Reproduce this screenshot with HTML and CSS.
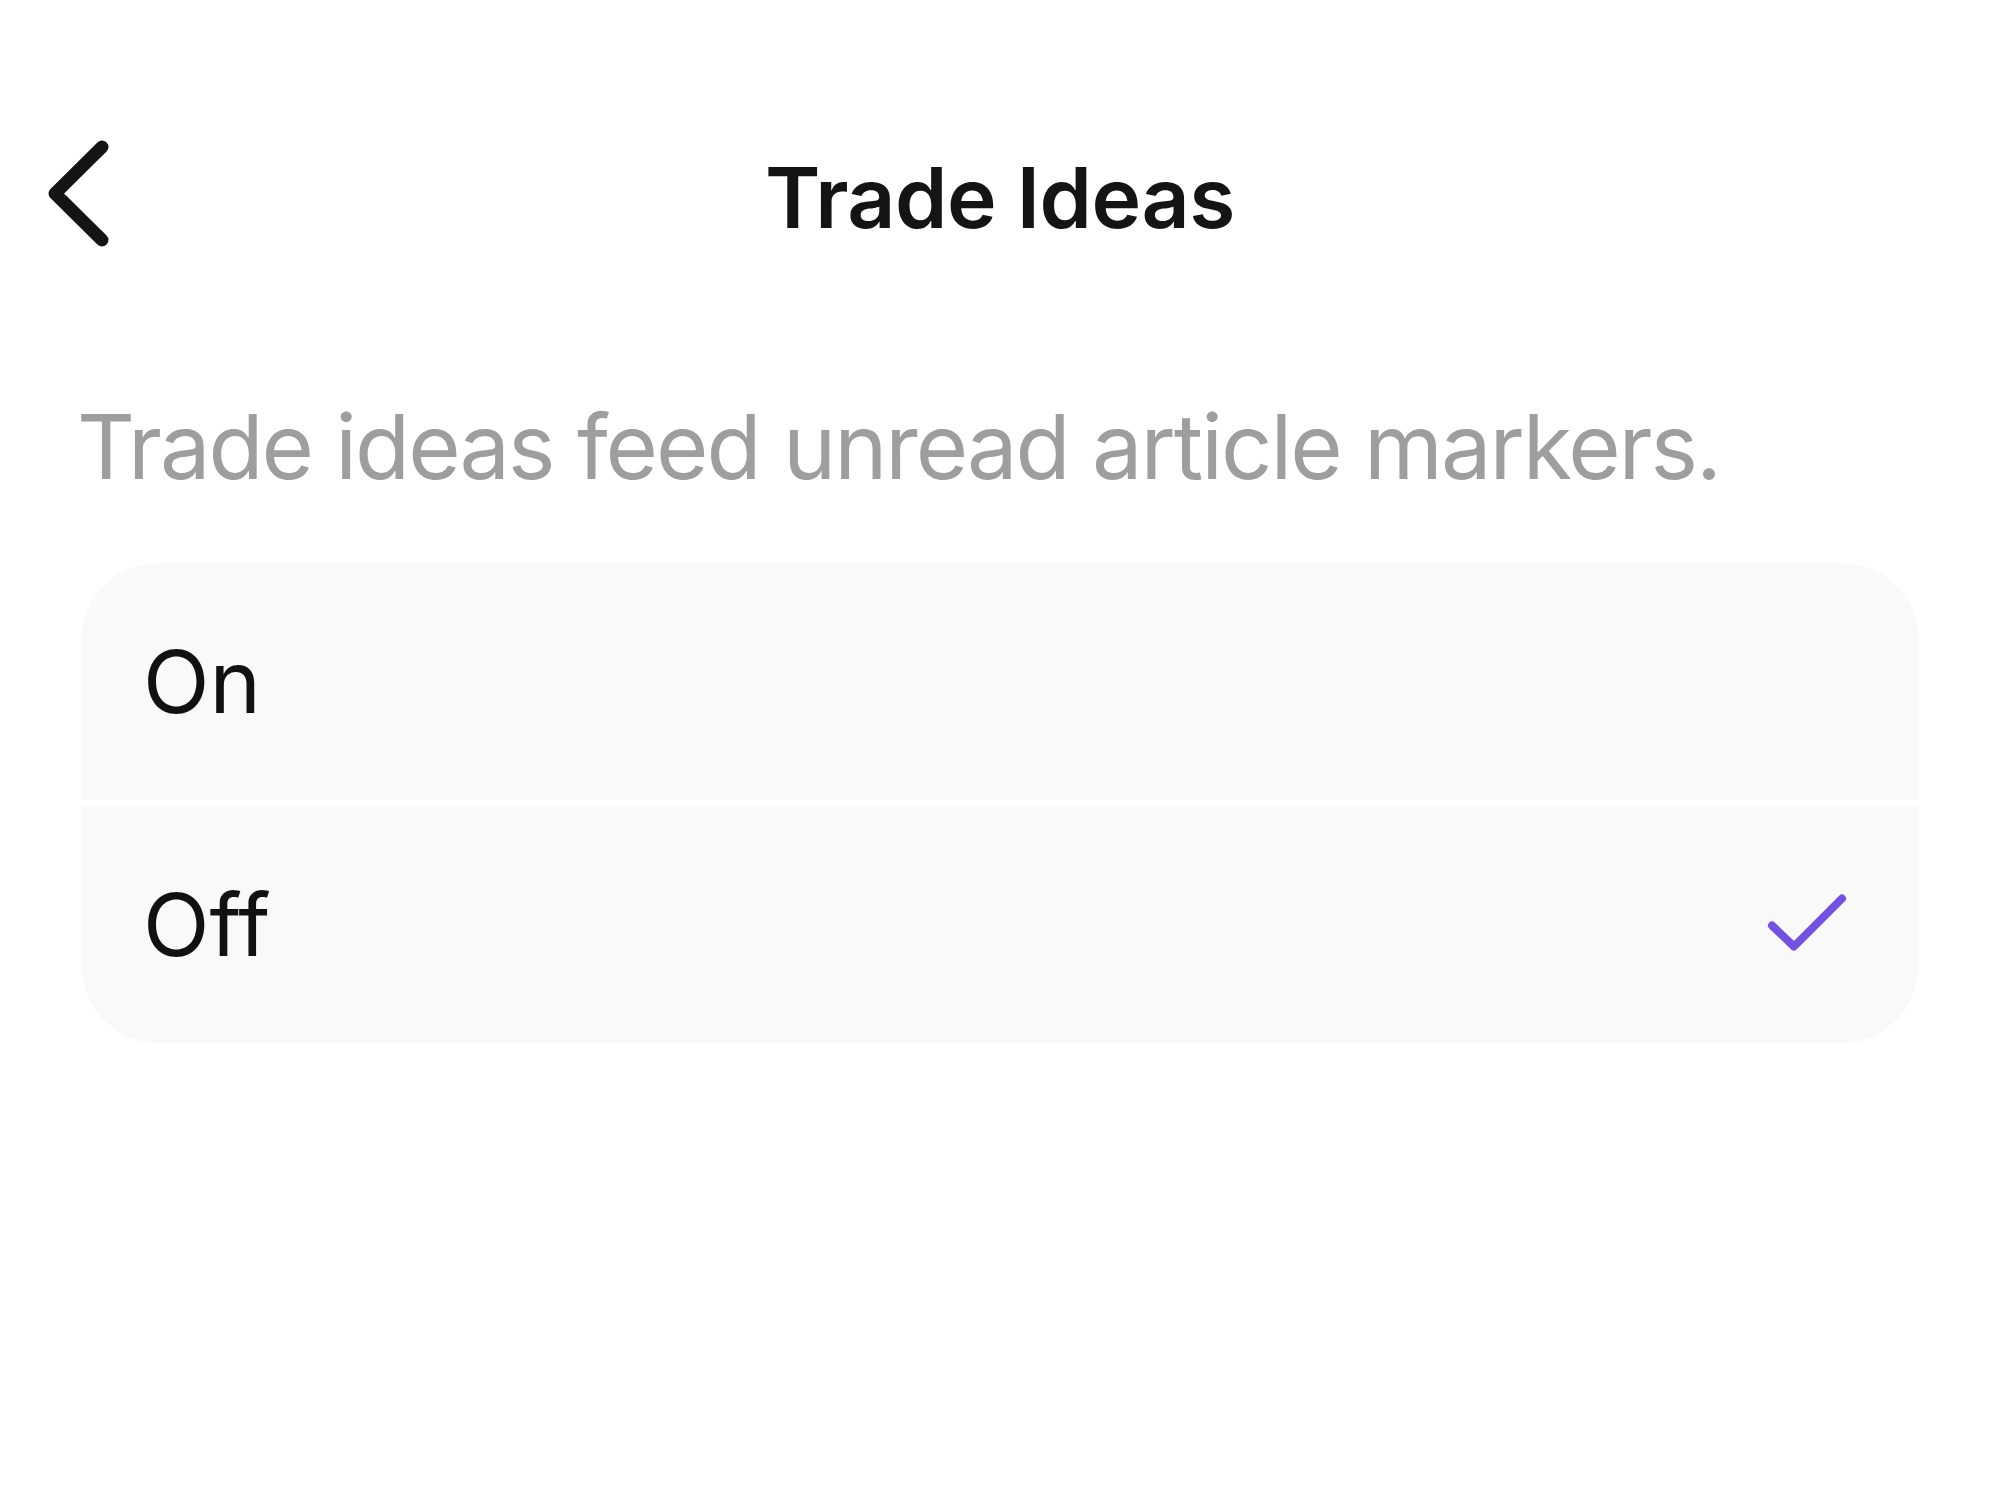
FILE: index.html
```html
<!DOCTYPE html>
<html lang="en">
<head>
<meta charset="utf-8">
<title>Trade Ideas</title>
<link rel="stylesheet" href="styles.css">
</head>
<body>
<div class="screen">
  <header class="nav">
    <button class="back" aria-label="Back">
      <svg class="back-icon" width="80" height="120" viewBox="0 0 80 120">
        <path d="M62 9 L15 55.5 L62 102" fill="none" stroke="#141414" stroke-width="13" stroke-linecap="round" stroke-linejoin="round"/>
      </svg>
    </button>
    <h1 class="title">Trade Ideas</h1>
    <div class="nav-spacer"></div>
  </header>
  <main class="content">
    <p class="desc">Trade ideas feed unread article markers.</p>
    <div class="card">
      <div class="option">
        <span class="option-label">On</span>
      </div>
      <div class="option">
        <span class="option-label">Off</span>
        <svg class="check" width="90" height="68" viewBox="0 0 90 68">
          <path d="M10 34.5 L32 55.5 L80 7.5" fill="none" stroke="#7352e3" stroke-width="8" stroke-linecap="round" stroke-linejoin="round"/>
        </svg>
      </div>
    </div>
  </main>
</div>
</body>
</html>
```

FILE: styles.css
```css
* {
  box-sizing: border-box;
}

html, body {
  margin: 0;
  padding: 0;
  background: #ffffff;
}

body {
  font-family: "Inter", "Noto Sans", "Liberation Sans", sans-serif;
  color: #141414;
}

.screen {
  width: 2000px;
  height: 1508px;
  overflow: hidden;
}

.nav {
  display: grid;
  grid-template-columns: 1fr auto 1fr;
  align-items: center;
  height: 120px;
  margin-top: 138px;
  padding: 0 40px;
}

.back {
  justify-self: start;
  border: 0;
  background: none;
  padding: 0;
  margin: 0;
  width: 80px;
  height: 120px;
  display: block;
}

.back-icon {
  display: block;
}

.title {
  margin: 0;
  font-size: 84px;
  line-height: 100px;
  font-weight: 600;
  color: #141414;
  letter-spacing: -0.5px;
}

.content {
  padding: 0 82px;
  margin-top: 135px;
}

.desc {
  margin: 0 0 62px -5px;
  font-size: 90px;
  line-height: 108px;
  font-weight: 400;
  color: #9e9e9e;
  letter-spacing: -2px;
  white-space: nowrap;
}

.card {
  display: flex;
  flex-direction: column;
  gap: 6px;
  border-radius: 76px;
  overflow: hidden;
}

.option {
  height: 237px;
  background: #f9f9f9;
  display: flex;
  align-items: center;
  justify-content: space-between;
  padding: 0 66px 0 61px;
}

.option-label {
  font-size: 87px;
  line-height: 100px;
  font-weight: 400;
  color: #111111;
}

.check {
  display: block;
}
```
